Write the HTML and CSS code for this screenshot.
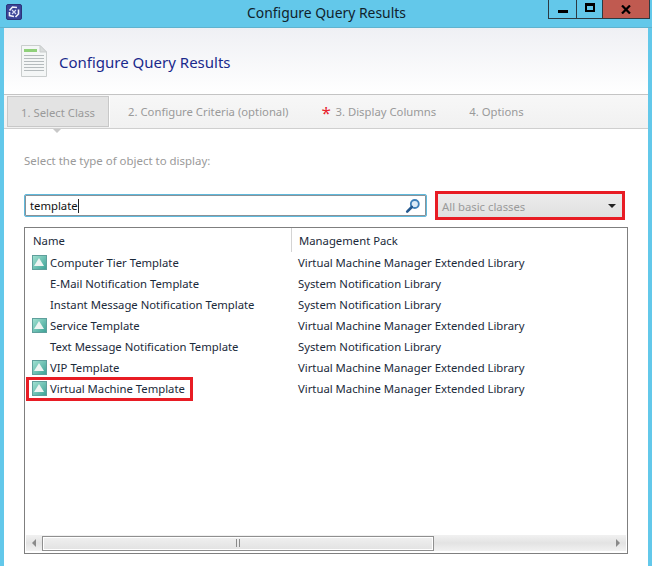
FILE: index.html
```html
<!DOCTYPE html>
<html lang="en">
<head>
    <meta charset="UTF-8">
    <meta name="viewport" content="width=device-width, initial-scale=1.0">
    <title>Configure Query Results</title>
    <link rel="stylesheet" href="styles.css">
</head>
<body>
    <div class="titlebar">
        <svg class="app-icon" width="16" height="16" viewBox="0 0 16 16">
            <rect x="0.5" y="0.5" width="15" height="15" rx="1.5" fill="#3a4396" stroke="#2c3478"/>
            <path d="M3.5 6.5 L6.5 3 L11 3.5 M12.5 5.5 L12.5 10 L9.5 13 M8 12.5 L3.5 11.5 L3.5 8" fill="none" stroke="#f0f1fa" stroke-width="1.6"/>
            <path d="M6 6 L10 10 M10 6 L6 10" stroke="#d5d9f2" stroke-width="1.2"/>
        </svg>
        <div class="title">Configure Query Results</div>
        <div class="controls">
            <div class="ctl ctl-min"><span class="min-glyph"></span></div>
            <div class="ctl ctl-max"><span class="max-glyph"></span></div>
            <div class="ctl ctl-close">
                <svg width="10" height="9" viewBox="0 0 10 9"><path d="M1 0.5 L9 8.5 M9 0.5 L1 8.5" stroke="#000" stroke-width="2.2"/></svg>
            </div>
        </div>
    </div>

    <div class="window">
        <div class="header">
            <svg class="doc-icon" width="28" height="34" viewBox="0 0 28 34">
                <path d="M1.5 1.5 H20 L26.5 8 V32.5 H1.5 Z" fill="#f4f6f6" stroke="#c9cdcd"/>
                <path d="M20 1.5 V8 H26.5 Z" fill="#d9dcdc" stroke="#c9cdcd"/>
                <rect x="4" y="5" width="13" height="3" fill="#8fd07a"/>
                <path d="M4 11.5 H24 M4 14.5 H24 M4 17.5 H24 M4 20.5 H24 M4 23.5 H24 M4 26.5 H24" stroke="#b5bbbd" stroke-width="1"/>
            </svg>
            <h1>Configure Query Results</h1>
        </div>

        <div class="tabs">
            <div class="tab tab-active">1. Select Class</div>
            <div class="tab tab-2">2. Configure Criteria (optional)</div>
            <div class="tab tab-3"><span class="star">*</span>3. Display Columns</div>
            <div class="tab tab-4">4. Options</div>
        </div>
        <div class="tab-arrow"></div>

        <div class="content">
            <p class="prompt">Select the type of object to display:</p>

            <div class="filters">
                <div class="search">
                    <span class="search-text">template</span>
                    <svg width="16" height="16" viewBox="0 0 16 16">
                        <circle cx="9.8" cy="6" r="4" fill="#dbeaf6" stroke="#3d7fb8" stroke-width="1.8"/>
                        <path d="M6.8 9 L2.2 13.6" stroke="#23588f" stroke-width="2.6" stroke-linecap="round"/>
                    </svg>
                </div>
                <div class="combo">
                    <span class="combo-text">All basic classes</span>
                    <span class="combo-arrow"></span>
                </div>
            </div>

            <div class="list">
                <div class="list-head">
                    <div class="col-name">Name</div>
                    <div class="col-pack">Management Pack</div>
                </div>
                <div class="rows">
                    <div class="row">
                        <div class="cell-name"><span class="tpl-icon"></span>Computer Tier Template</div>
                        <div>Virtual Machine Manager Extended Library</div>
                    </div>
                    <div class="row">
                        <div class="cell-name"><span class="no-icon"></span>E-Mail Notification Template</div>
                        <div>System Notification Library</div>
                    </div>
                    <div class="row">
                        <div class="cell-name"><span class="no-icon"></span>Instant Message Notification Template</div>
                        <div>System Notification Library</div>
                    </div>
                    <div class="row">
                        <div class="cell-name"><span class="tpl-icon"></span>Service Template</div>
                        <div>Virtual Machine Manager Extended Library</div>
                    </div>
                    <div class="row">
                        <div class="cell-name"><span class="no-icon"></span>Text Message Notification Template</div>
                        <div>System Notification Library</div>
                    </div>
                    <div class="row">
                        <div class="cell-name"><span class="tpl-icon"></span>VIP Template</div>
                        <div>Virtual Machine Manager Extended Library</div>
                    </div>
                    <div class="row">
                        <div class="cell-name"><span class="marked"><span class="tpl-icon"></span>Virtual Machine Template</span></div>
                        <div>Virtual Machine Manager Extended Library</div>
                    </div>
                </div>
                <div class="hscroll">
                    <span class="arrow-left"></span>
                    <div class="thumb"><span class="grip"></span></div>
                    <span class="arrow-right"></span>
                </div>
            </div>
        </div>
    </div>
</body>
</html>
```

FILE: styles.css
```css
body {
    font-family: "Noto Sans", "Open Sans", sans-serif;
    margin: 0;
    height: 566px;
    overflow: hidden;
    background-color: #63c8ea;
    display: flex;
    flex-direction: column;
}
.titlebar {
    height: 27px;
    flex: none;
    display: flex;
    align-items: flex-start;
    padding-left: 6px;
    border-bottom: 1px solid #5fb3cf;
}
.app-icon {
    margin-top: 4px;
    flex: none;
}
.title {
    flex: 1;
    text-align: center;
    font-size: 13.9px;
    line-height: 26px;
    color: #10222c;
    padding-left: 83px;
}
.controls {
    display: flex;
    flex: none;
    height: 18px;
    margin-right: 2px;
    border: 1px solid #2c3a42;
    border-top: none;
}
.ctl {
    height: 18px;
    display: flex;
    align-items: center;
    justify-content: center;
}
.ctl-min {
    width: 27px;
    border-right: 1px solid #2c3a42;
}
.ctl-max {
    width: 25px;
    border-right: 1px solid #2c3a42;
}
.ctl-close {
    width: 46px;
    background-color: #c05a50;
}
.min-glyph {
    width: 10px;
    height: 3px;
    margin-top: 5px;
    background-color: #000;
}
.max-glyph {
    width: 6px;
    height: 4px;
    margin-bottom: 3px;
    border: 2px solid #000;
    border-top-width: 3px;
}
.window {
    flex: 1;
    margin: 0 4px;
    background-color: #fff;
    display: flex;
    flex-direction: column;
}
.header {
    height: 66px;
    flex: none;
    display: flex;
    align-items: center;
    padding-left: 16px;
    background: linear-gradient(#eff0f4, #ffffff);
    border-bottom: 1px solid #c4c4c4;
}
.doc-icon {
    flex: none;
    margin-right: 11px;
}
h1 {
    margin: 1px 0 0;
    font-size: 15px;
    font-weight: normal;
    color: #1a2a8c;
}
.tabs {
    height: 33px;
    flex: none;
    display: flex;
    background: linear-gradient(#f7f7f7, #f1f1f1);
    border-bottom: 1px solid #cfcfcf;
    font-size: 11.3px;
    color: #9a9a9a;
}
.tab {
    line-height: 33px;
    white-space: nowrap;
}
.tab-active {
    width: 102px;
    margin: 1px 0 1px 3px;
    line-height: 31px;
    box-sizing: border-box;
    text-align: center;
    background-color: #e3e3e3;
    border: 1px solid #c8c8c8;
    box-shadow: 1px 0 0 #ffffff;
}
.tab-2 {
    margin-left: 19px;
}
.tab-3 {
    margin-left: 33px;
    display: flex;
}
.star {
    color: #e8222e;
    font-size: 17px;
    line-height: 35px;
    width: 14px;
}
.tab-4 {
    margin-left: 33px;
}
.tab-arrow {
    width: 0;
    height: 0;
    margin-left: 49px;
    border-left: 4px solid transparent;
    border-right: 4px solid transparent;
    border-top: 4px solid #c8c8c8;
}
.content {
    flex: 1;
    padding: 0 20px;
}
.prompt {
    margin: 20px 0 0;
    font-size: 11.45px;
    line-height: 16px;
    color: #9a9a9a;
}
.filters {
    display: flex;
    align-items: center;
    margin-top: 25px;
}
.search {
    width: 403px;
    height: 23px;
    box-sizing: border-box;
    display: flex;
    align-items: center;
    justify-content: space-between;
    padding: 0 5px 0 5px;
    border: 1px solid #5fb9dc;
    border-radius: 2px;
    box-shadow: 0 0 0 1px #8a9298 inset;
    font-size: 11.3px;
    color: #111;
}
.search-text {
    border-right: 1px solid #222;
    line-height: 14px;
}
.combo {
    width: 184px;
    height: 23px;
    box-sizing: border-box;
    margin-left: 11px;
    padding: 0 6px 0 4px;
    display: flex;
    align-items: center;
    justify-content: space-between;
    background: linear-gradient(#ececec, #e0e0e0);
    outline: 3px solid #e81c24;
    font-size: 11.3px;
    color: #9a9a9a;
}
.combo-text {
    padding-top: 2px;
}
.combo-arrow {
    width: 0;
    height: 0;
    border-left: 4px solid transparent;
    border-right: 4px solid transparent;
    border-top: 4px solid #222;
}
.list {
    margin-top: 10px;
    width: 604px;
    height: 327px;
    box-sizing: border-box;
    border: 1px solid #7f7f7f;
    display: flex;
    flex-direction: column;
    font-size: 11.3px;
    color: #1b2a3a;
}
.list-head {
    display: flex;
    height: 24px;
    flex: none;
    line-height: 25px;
}
.col-name {
    width: 258px;
    padding-left: 8px;
    border-right: 1px solid #d4d4d4;
}
.col-pack {
    padding-left: 7px;
}
.rows {
    flex: 1;
}
.row {
    display: flex;
    align-items: center;
    height: 21px;
    white-space: nowrap;
}
.cell-name {
    width: 273px;
    flex: none;
    display: flex;
    align-items: center;
    padding-left: 7px;
    box-sizing: border-box;
}
.marked {
    display: flex;
    align-items: center;
    height: 18px;
    margin-left: -3px;
    padding: 0 5px 0 3px;
    outline: 3px solid #e81c24;
}
.tpl-icon {
    width: 15px;
    height: 15px;
    margin-right: 3px;
    flex: none;
    position: relative;
    background: linear-gradient(135deg, #a0e0d0, #3fa398);
    border: 1px solid #5f9f9c;
    box-sizing: border-box;
}
.tpl-icon::after {
    content: "";
    position: absolute;
    left: 1px;
    top: 2px;
    border-left: 5.5px solid transparent;
    border-right: 5.5px solid transparent;
    border-bottom: 8px solid #eef4f2;
}
.no-icon {
    width: 18px;
    flex: none;
}
.hscroll {
    height: 16px;
    margin: 0 1px 2px;
    flex: none;
    display: flex;
    align-items: center;
    background: linear-gradient(#f1f1f1, #e3e3e3 50%, #f1f1f1);
}
.arrow-left {
    margin-left: 6px;
    border-top: 4px solid transparent;
    border-bottom: 4px solid transparent;
    border-right: 4px solid #8a8a8a;
}
.thumb {
    width: 392px;
    height: 15px;
    box-sizing: border-box;
    margin-left: 6px;
    border: 1px solid #8f8f8f;
    background: linear-gradient(#f0f0f0, #e2e2e2);
    box-shadow: 0 0 0 1px #fff inset;
    display: flex;
    align-items: center;
    justify-content: center;
}
.grip {
    width: 2px;
    height: 8px;
    border-left: 1px solid #8a8a8a;
    border-right: 1px solid #8a8a8a;
}
.arrow-right {
    margin-left: auto;
    margin-right: 6px;
    border-top: 4px solid transparent;
    border-bottom: 4px solid transparent;
    border-left: 4px solid #8a8a8a;
}
```
